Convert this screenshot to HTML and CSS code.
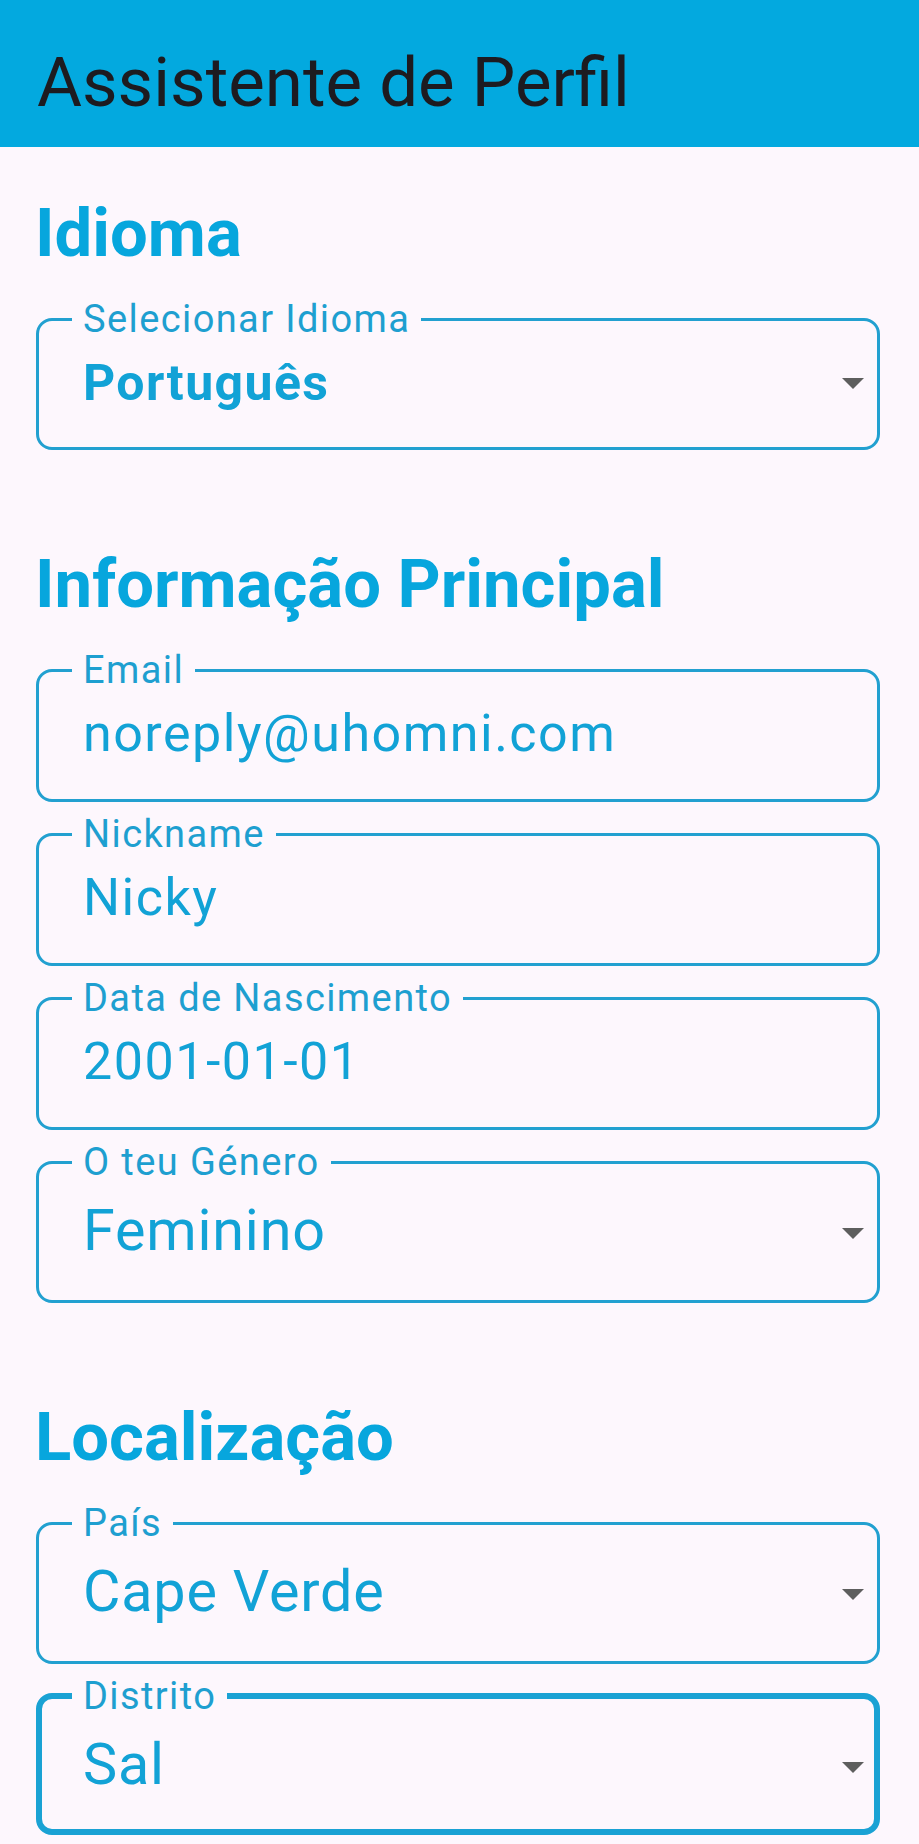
FILE: index.html
```html
<!DOCTYPE html>
<html lang="pt">
<head>
<meta charset="utf-8">
<title>Assistente de Perfil</title>
<link rel="stylesheet" href="styles.css">
</head>
<body>
<header class="appbar">
  <h1 class="appbar-title">Assistente de Perfil</h1>
</header>
<main class="content">
  <section class="section">
    <h2 class="section-title">Idioma</h2>
    <div class="fields">
      <fieldset class="field field-lang">
        <legend class="field-label">Selecionar Idioma</legend>
        <div class="field-row">
          <span class="value value-bold">Português</span>
          <svg class="arrow" width="22" height="11" viewBox="0 0 22 11"><polygon points="0,0 22,0 11,11"/></svg>
        </div>
      </fieldset>
    </div>
  </section>

  <section class="section">
    <h2 class="section-title">Informação Principal</h2>
    <div class="fields">
      <fieldset class="field field-text">
        <legend class="field-label">Email</legend>
        <div class="field-row"><span class="value value-text">noreply@uhomni.com</span></div>
      </fieldset>
      <fieldset class="field field-text">
        <legend class="field-label">Nickname</legend>
        <div class="field-row"><span class="value value-text">Nicky</span></div>
      </fieldset>
      <fieldset class="field field-text">
        <legend class="field-label">Data de Nascimento</legend>
        <div class="field-row"><span class="value value-text">2001-01-01</span></div>
      </fieldset>
      <fieldset class="field field-select">
        <legend class="field-label">O teu Género</legend>
        <div class="field-row">
          <span class="value value-select">Feminino</span>
          <svg class="arrow arrow-select" width="22" height="11" viewBox="0 0 22 11"><polygon points="0,0 22,0 11,11"/></svg>
        </div>
      </fieldset>
    </div>
  </section>

  <section class="section">
    <h2 class="section-title">Localização</h2>
    <div class="fields">
      <fieldset class="field field-select">
        <legend class="field-label">País</legend>
        <div class="field-row">
          <span class="value value-select">Cape Verde</span>
          <svg class="arrow arrow-select" width="22" height="11" viewBox="0 0 22 11"><polygon points="0,0 22,0 11,11"/></svg>
        </div>
      </fieldset>
      <fieldset class="field field-select field-focused">
        <legend class="field-label">Distrito</legend>
        <div class="field-row">
          <span class="value value-select">Sal</span>
          <svg class="arrow arrow-select" width="22" height="11" viewBox="0 0 22 11"><polygon points="0,0 22,0 11,11"/></svg>
        </div>
      </fieldset>
    </div>
  </section>
</main>
</body>
</html>
```

FILE: styles.css
```css
html, body {
  margin: 0;
  padding: 0;
}

body {
  background: #FDF7FD;
  font-family: Roboto, "Noto Sans", "Liberation Sans", sans-serif;
  color: #1D1B20;
}

.appbar {
  background: #03A9DF;
  height: 147px;
  box-sizing: border-box;
  padding: 44px 0 0 37px;
}

.appbar-title {
  margin: 0;
  font-size: 69px;
  font-weight: 400;
  line-height: 78px;
  color: #1D1B20;
}

.content {
  padding: 47px 39px 0 36px;
}

.section + .section {
  margin-top: 95px;
}

.section-title {
  margin: 0 0 25px -1px;
  font-size: 67px;
  font-weight: 700;
  line-height: 78px;
  color: #07A6DD;
}

.fields {
  display: flex;
  flex-direction: column;
  gap: 10px;
}

.field {
  margin: 0;
  min-width: 0;
  border: 3px solid #22A0D0;
  border-radius: 16px;
  padding: 13px 13px 0 44px;
}

.field-label {
  margin-left: -11px;
  padding: 0 11px;
  font-size: 38px;
  line-height: 44px;
  letter-spacing: 1.4px;
  color: #1E9FD0;
}

.field-row {
  display: flex;
  align-items: center;
  justify-content: space-between;
}

.value {
  color: #12A2D6;
  white-space: nowrap;
}

.value-text {
  font-size: 52px;
  line-height: 57px;
  letter-spacing: 1.5px;
}

.value-select {
  font-size: 57.5px;
  line-height: 68px;
  letter-spacing: 0.8px;
}

.value-bold {
  font-size: 50px;
  font-weight: 700;
  line-height: 59px;
  letter-spacing: 1.4px;
}

.field-text {
  padding-bottom: 37px;
}

.field-select {
  padding-bottom: 35px;
}

.field-lang {
  padding-bottom: 34px;
}

.field-focused {
  border-width: 6px;
  border-color: #1AA2D4;
  padding-left: 41px;
  padding-right: 10px;
  padding-bottom: 30px;
}

.arrow {
  flex: none;
  fill: #5E5E5E;
}

.arrow-select {
  margin-top: 4px;
}
```
